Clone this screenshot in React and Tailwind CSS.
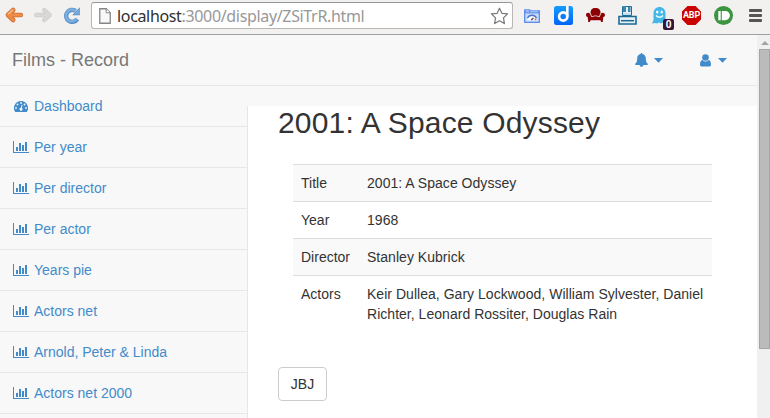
import React from 'react';

function BackIcon() {
  return (
    <svg className="block h-[18px] w-[20px]" viewBox="0 0 20 18">
      <path d="M9.200 4 3.900 9l5.300 5M5 9H16.800" fill="none" stroke="#cf6f35" strokeWidth="4.600" strokeLinecap="round" strokeLinejoin="round" />
      <path d="M9.200 4 3.900 9l5.300 5M5 9H16.800" fill="none" stroke="#f08c45" strokeWidth="2.800" strokeLinecap="round" strokeLinejoin="round" />
      <path d="M8.500 4 4.500 7.800" fill="none" stroke="#f9bd8c" strokeWidth="1.500" strokeLinecap="round" />
    </svg>
  );
}

function ForwardIcon() {
  return (
    <svg className="block h-[18px] w-[20px]" viewBox="0 0 20 18">
      <path d="M11.300 4 16.600 9l-5.300 5M15.500 9H3.300" fill="none" stroke="#cecccA" strokeWidth="4.400" strokeLinecap="round" strokeLinejoin="round" />
      <path d="M11.300 4 16.600 9l-5.300 5M15.500 9H3.300" fill="none" stroke="#dad8d5" strokeWidth="2.800" strokeLinecap="round" strokeLinejoin="round" />
    </svg>
  );
}

function ReloadIcon() {
  return (
    <svg className="block h-[18px] w-[18px]" viewBox="0 0 18 18">
      <path d="M14.300 13A6 6 0 1 1 12.500 4.900" fill="none" stroke="#5a8fc8" strokeWidth="4.400" />
      <path d="M16.800 1.300v8H9.200z" fill="#5a8fc8" />
      <path d="M13.800 12.600A5.900 5.900 0 1 1 12.800 5.200" fill="none" stroke="#7badde" strokeWidth="2.700" />
      <path d="M15.900 3.300v5.100h-4.900z" fill="#7badde" />
    </svg>
  );
}

function PageIcon() {
  return (
    <svg className="block h-[16px] w-[12px]" viewBox="0 0 12 16">
      <path d="M.75.75h6.500l4 4v10.500H.75z" fill="#f8f8f8" stroke="#858585" strokeWidth="1.300" />
      <path d="M7.200.8v4h4" fill="#fff" stroke="#858585" />
    </svg>
  );
}

function StarIcon() {
  return (
    <svg className="block h-[18px] w-[19px]" viewBox="0 0 19 18">
      <path d="M9.500 1.200 11.900 6.300l5.700.6-4.100 4 .9 5.700-4.900-2.800-4.900 2.800.9-5.700-4.100-4 5.700-.6z" fill="#fff" stroke="#777" strokeWidth="1.200" strokeLinejoin="round" />
    </svg>
  );
}

function SpeedWindowIcon() {
  return (
    <svg className="block h-[14px] w-[16px]" viewBox="0 0 16 14">
      <path d="M.7 13.300V.8h5l.8 1.200h8.800v11.300z" fill="#c9dafa" stroke="#5b8def" strokeWidth="1.300" />
      <path d="M1 2h14v2.400H1z" fill="#5b8def" />
      <path d="M2 2.800h3m1 0h8" stroke="#bcd1fa" />
      <path d="M3 11.300a5 5 0 0 1 10 0z" fill="#fff" />
      <path d="M3.400 9.300a5 5 0 0 1 9.200 0" fill="none" stroke="#4b78cf" strokeWidth="1.300" />
      <path d="M7.200 10.800 9.500 9" stroke="#555" strokeWidth="1.500" />
      <path d="M10.800 9.500h1.500v1.700h-1.500z" fill="#e2574c" />
    </svg>
  );
}

function DiigoIcon() {
  return (
    <svg className="block h-[19px] w-[19px]" viewBox="0 0 19 19">
      <defs>
        <linearGradient id="diigo" x1="0" y1="0" x2="0" y2="1">
          <stop stopColor="#169cff" />
          <stop offset="1" stopColor="#0063f5" />
        </linearGradient>
      </defs>
      <rect width="19" height="19" rx="2.500" fill="url(#diigo)" />
      <circle cx="9.200" cy="10.500" r="4.100" fill="none" stroke="#fff" strokeWidth="2.700" />
      <path d="M12 0H14.600V10.500h-2.600z" fill="#fff" />
    </svg>
  );
}

function CouchIcon() {
  return (
    <svg className="block h-[15px] w-[19px]" viewBox="0 0 19 15">
      <path d="M4.500 5C4.500 1.500 6 0 9.500 0s5 1.500 5 5L13 8.500H6z" fill="#8b0004" />
      <path d="M0 7c0-1.500 1-2.300 2.300-2.300S5 5.600 5.400 7.500h8.200c.4-1.900 1.400-2.800 2.700-2.800S19 5.500 19 7c0 1.200-.8 1.900-1.700 2.100l-.6 4.900h-1.600l-.6-1.700h-10L3.900 14H2.300l-.6-4.900C.8 8.900 0 8.200 0 7z" fill="#8b0004" />
      <path d="M4 5.200 5.800 9M15 5.200 13.200 9M5.800 8.700Q9.500 6.800 13.200 8.700" fill="none" stroke="#eee4e2" strokeWidth=".8" />
    </svg>
  );
}

function DeskIcon() {
  return (
    <svg className="block h-[19px] w-[19px]" viewBox="0 0 19 19">
      <path d="M4.500.5h9v9h-9z" fill="#e5f1f6" stroke="#21709c" />
      <path d="M5 0h3v6H5zM10 1h2.500v5H10z" fill="#3b87ad" />
      <path d="M5 7h8v2H5z" fill="#c5dfea" />
      <path d="M1 10.500h17v7.500H1z" fill="#e4f1f6" stroke="#1d6995" strokeWidth="1.600" />
      <path d="M3 14.700h13" stroke="#1d6995" strokeWidth="1.500" />
    </svg>
  );
}

function GhostIcon() {
  return (
    <div className="relative h-[23px] w-[22px]">
      <svg className="block h-[17px] w-[15px]" viewBox="0 0 15 17">
        <path d="M1.500 6.500C1.500 2.500 4 0 7.500 0s6 2.500 6 6.500V13l1.500 2-2 1.500-2-1-2 1-2-1-2 1-2-.5-3 .5L1.500 13z" fill="#44b7e7" />
        <ellipse cx="5.300" cy="5" rx="1.200" ry="1.600" fill="#fff" />
        <ellipse cx="9.700" cy="5" rx="1.200" ry="1.600" fill="#fff" />
        <path d="M4 8.500Q7.500 12 11 8.500" fill="none" stroke="#fff" strokeWidth="1.300" />
      </svg>
      <span className="absolute left-[11px] top-[12px] flex h-[11px] w-[11px] items-center justify-center rounded-[2px] bg-[#351639] font-['Roboto',sans-serif] text-[10px] font-bold leading-none text-white">0</span>
    </div>
  );
}

function BlockIcon() {
  return (
    <div className="flex h-[19px] w-[19px] items-center justify-center bg-[#cb0000] [clip-path:polygon(29%_0,71%_0,100%_29%,100%_71%,71%_100%,29%_100%,0_71%,0_29%)]">
      <span className="font-['Roboto',sans-serif] text-[9px] font-bold leading-none tracking-[-0.200px] text-white">ABP</span>
    </div>
  );
}

function PushIcon() {
  return (
    <svg className="block h-[19px] w-[19px]" viewBox="0 0 19 19">
      <circle cx="9.500" cy="9.500" r="9.500" fill="#3b943f" />
      <path d="M4.300 5h2.400v9.200H4.300zM7.800 5h3.500a4.600 4.600 0 0 1 0 9.200H7.800z" fill="#fff" />
    </svg>
  );
}

function Toolbar() {
  return (
    <div className="flex h-[35px] shrink-0 border-b border-[#a0a0a0] bg-[#f2f1f0]">
      <div className="ml-[4px] mt-[6px] flex w-[87px]">
        <BackIcon />
        <div className="ml-[9px]"><ForwardIcon /></div>
        <div className="ml-[10px]"><ReloadIcon /></div>
      </div>
      <div className="mt-[2px] flex h-[27px] w-[422px] items-center rounded-[3px] border border-[#b8b6b4] border-t-[#969594] bg-white pl-[7px] pr-[3px]">
        <PageIcon />
        <span className="ml-[6px] flex-1 whitespace-nowrap font-['Noto_Sans',sans-serif] text-[16px] leading-[22px] tracking-[-0.340px] text-[#989898]">
          <span className="text-[#303030]">localhost</span>:3000/display/ZSiTrR.html
        </span>
        <StarIcon />
      </div>
      <div className="ml-[11px] mt-[9px]"><SpeedWindowIcon /></div>
      <div className="ml-[14px] mt-[6px]"><DiigoIcon /></div>
      <div className="ml-[13px] mt-[8px]"><CouchIcon /></div>
      <div className="ml-[13px] mt-[6px]"><DeskIcon /></div>
      <div className="ml-[15px] mt-[7px]"><GhostIcon /></div>
      <div className="ml-[8px] mt-[6px]"><BlockIcon /></div>
      <div className="ml-[13px] mt-[6px]"><PushIcon /></div>
      <div className="ml-[16px] mt-[9px] flex flex-col gap-[2px]">
        <span className="h-[3px] w-[13px] rounded-[1px] bg-[#555]" />
        <span className="h-[3px] w-[13px] rounded-[1px] bg-[#555]" />
        <span className="h-[3px] w-[13px] rounded-[1px] bg-[#555]" />
      </div>
    </div>
  );
}

function Caret() {
  return (
    <svg className="block h-[5px] w-[9px]" viewBox="0 0 9 5">
      <path d="M0 0h9L4.500 4.800z" fill="#428bca" />
    </svg>
  );
}

function Navbar() {
  return (
    <div className="flex h-[51px] shrink-0 border-b border-[#e7e7e7] bg-[#f8f8f8] pl-[12px]">
      <span className="flex-1 pt-[15px] text-[18px] leading-5 text-[#777]">Films - Record</span>
      <div className="mr-[30px] flex h-[50px] items-center">
        <svg className="mr-[6px] block h-[14px] w-[13px]" viewBox="0 0 13 14">
          <path d="M6.500 0c.6 0 .9.500.8 1.100C9.600 1.500 10.800 3.300 10.800 5.300c0 2.900.6 4.500 2.200 5.700 0 .500-.4.900-.9.900H8.400a1.900 1.900 0 0 1-3.800 0H.9c-.5 0-.9-.4-.9-.9C1.600 9.800 2.200 8.200 2.200 5.300c0-2 1.200-3.800 3.500-4.200C5.600.5 5.900 0 6.500 0z" fill="#428bca" />
        </svg>
        <Caret />
        <svg className="ml-[37px] mr-[7px] block h-[13px] w-[11px]" viewBox="0 0 11 13">
          <circle cx="5.500" cy="3.500" r="3.300" fill="#428bca" />
          <path d="M2.500 5.900Q5.500 8.900 8.500 5.900C10.300 6.200 11 8.200 11 10.500c0 1.500-.8 2.100-2 2.100H2c-1.200 0-2-.6-2-2.100 0-2.300.7-4.300 2.500-4.600z" fill="#428bca" />
        </svg>
        <Caret />
      </div>
    </div>
  );
}

function DashboardIcon() {
  return (
    <svg className="mt-px block h-[12px] w-[14px]" viewBox="0 0 14 12">
      <path d="M7 0a7 7 0 0 1 5.900 10.800c-.1.200-.3.200-.5.200H1.600c-.2 0-.4 0-.5-.2A7 7 0 0 1 7 0z" fill="#428bca" />
      <g fill="#f8f8f8">
        <circle cx="2" cy="7" r=".9" />
        <circle cx="3.500" cy="3.500" r=".9" />
        <circle cx="7" cy="2" r=".9" />
        <circle cx="10.500" cy="3.500" r=".9" />
        <circle cx="12" cy="7" r=".9" />
        <path d="M7.700 3.800 8.500 4 7.900 7.100a1.500 1.500 0 1 1-1-.3z" />
      </g>
    </svg>
  );
}

function ChartIcon() {
  return (
    <svg className="block h-[12px] w-[16px]" viewBox="0 0 16 12" shapeRendering="crispEdges">
      <path d="M0 0h1v11h15v1H0zM3 6h2v4H3zM6 2h2v8H6zM9 4h2v6H9zM12 1h2v9h-2z" fill="#428bca" />
    </svg>
  );
}

const links = ['Per year', 'Per director', 'Per actor', 'Years pie', 'Actors net', 'Arnold, Peter & Linda', 'Actors net 2000'];

function Sidebar() {
  return (
    <nav className="w-[247px] shrink-0 text-[14px] leading-5 text-[#428bca]">
      <a className="flex h-[41px] items-center border-b border-[#e7e7e7] pl-[14px]">
        <DashboardIcon />
        <span className="ml-[6px]">Dashboard</span>
      </a>
      {links.map((label) => (
        <a key={label} className="flex h-[41px] items-center border-b border-[#e7e7e7] pl-[13px]">
          <ChartIcon />
          <span className="ml-[5px]">{label}</span>
        </a>
      ))}
    </nav>
  );
}

const rows = [
  ['Title', '2001: A Space Odyssey'],
  ['Year', '1968'],
  ['Director', 'Stanley Kubrick'],
  ['Actors', 'Keir Dullea, Gary Lockwood, William Sylvester, Daniel Richter, Leonard Rossiter, Douglas Rain'],
];

function Record() {
  return (
    <main className="mt-[20px] flex-1 border-l border-[#e7e7e7] bg-white pl-[30px] text-[#333]">
      <h1 className="text-[30px] leading-[33px] tracking-[0.170px]">2001: A Space Odyssey</h1>
      <div className="ml-[15px] mt-[25px] w-[419px] text-[14px] leading-5">
        {rows.map(([name, value]) => (
          <div key={name} className="flex border-t border-[#ddd] py-2 pl-2 odd:bg-[#f9f9f9]">
            <span className="w-[66px] shrink-0">{name}</span>
            <span className="flex-1 pr-2 tracking-[0.030px]">{value}</span>
          </div>
        ))}
      </div>
      <button className="mt-[35px] block h-[34px] w-[49px] rounded-[4px] border border-[#ccc] bg-white text-[14px] leading-5">JBJ</button>
    </main>
  );
}

function Scrollbar() {
  return (
    <div className="flex w-[13px] shrink-0 flex-col bg-[#f0f0f0] pl-[2px]">
      <span className="ml-[2px] mt-[6px] h-0 w-0 border-x-[4px] border-b-[4px] border-x-transparent border-b-[#a3a3a3]" />
      <div className="mt-[4px] h-[300px] border border-[#a5a5a5] bg-[#bbb]" />
    </div>
  );
}

export default function App() {
  return (
    <div className="flex h-[418px] w-[770px] flex-col overflow-hidden bg-white font-['Liberation_Sans',Arial,sans-serif]">
      <Toolbar />
      <div className="flex min-h-0 flex-1">
        <div className="flex min-w-0 flex-1 flex-col">
          <Navbar />
          <div className="flex min-h-0 flex-1 bg-[#f8f8f8]">
            <Sidebar />
            <Record />
          </div>
        </div>
        <Scrollbar />
      </div>
    </div>
  );
}
